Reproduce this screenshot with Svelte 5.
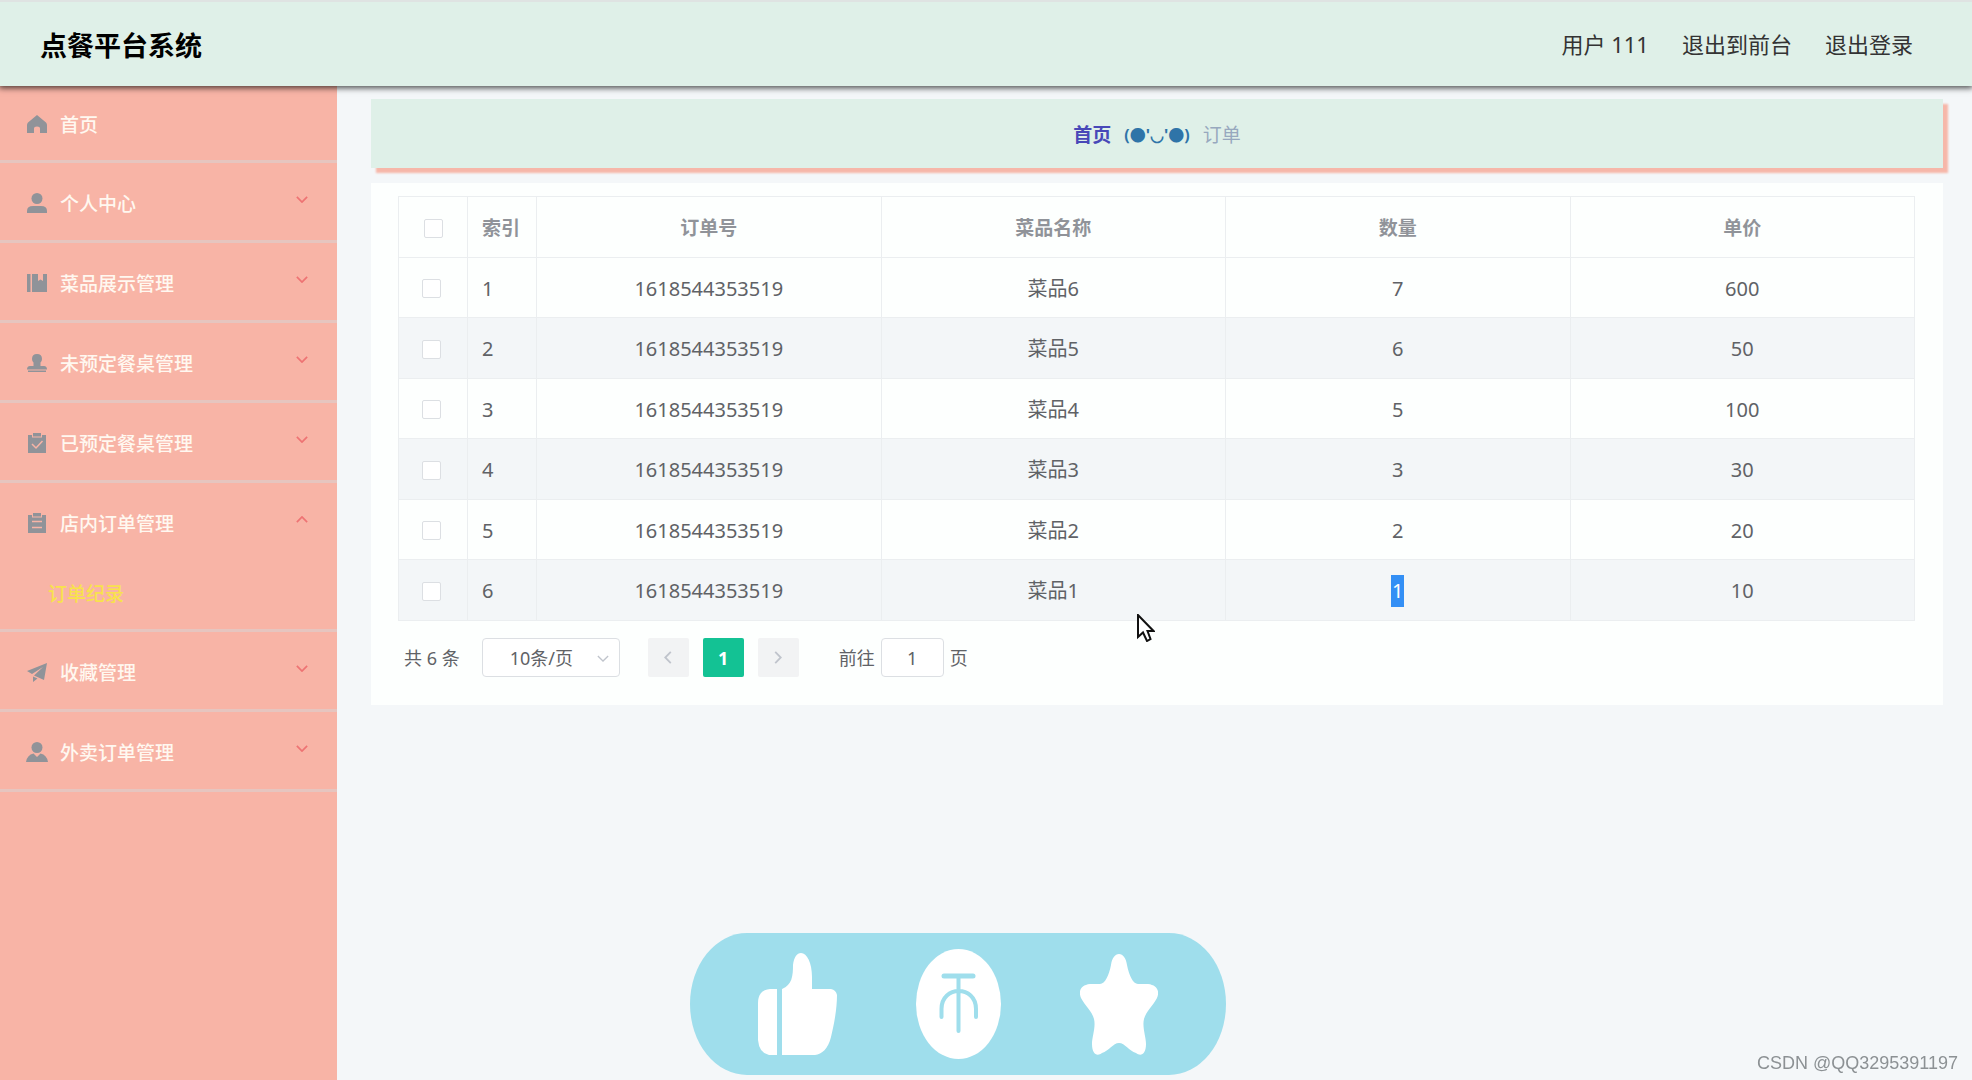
<script lang="ts">
	/**
	 * Order list page
	 * Header, collapsible side menu, order table with pagination and a floating action bar
	 */
	interface MenuItem {
		icon: string;
		label: string;
		children?: string[];
	}

	interface Order {
		id: number;
		orderNo: string;
		dish: string;
		count: number;
		price: number;
	}

	const menu: MenuItem[] = [
		{ icon: 'home', label: '首页' },
		{ icon: 'user', label: '个人中心', children: ['个人信息'] },
		{ icon: 'book', label: '菜品展示管理', children: ['菜品展示'] },
		{ icon: 'stamp', label: '未预定餐桌管理', children: ['未预定餐桌'] },
		{ icon: 'claim', label: '已预定餐桌管理', children: ['已预定餐桌'] },
		{ icon: 'order', label: '店内订单管理', children: ['订单纪录'] },
		{ icon: 'plane', label: '收藏管理', children: ['收藏'] },
		{ icon: 'custom', label: '外卖订单管理', children: ['外卖订单'] }
	];

	const orders: Order[] = [
		{ id: 1, orderNo: '1618544353519', dish: '菜品6', count: 7, price: 600 },
		{ id: 2, orderNo: '1618544353519', dish: '菜品5', count: 6, price: 50 },
		{ id: 3, orderNo: '1618544353519', dish: '菜品4', count: 5, price: 100 },
		{ id: 4, orderNo: '1618544353519', dish: '菜品3', count: 3, price: 30 },
		{ id: 5, orderNo: '1618544353519', dish: '菜品2', count: 2, price: 20 },
		{ id: 6, orderNo: '1618544353519', dish: '菜品1', count: 1, price: 10 }
	];

	let openMenu = $state('order');
	let checked = $state<number[]>([]);
	let pageSize = $state('10');
	let jumpTo = $state('1');

	let allChecked = $derived(checked.length === orders.length);

	function toggleMenu(item: MenuItem) {
		openMenu = openMenu === item.icon ? '' : item.icon;
	}

	function toggleAll() {
		checked = allChecked ? [] : orders.map((o) => o.id);
	}
</script>

{#snippet menuIcon(name: string)}
	<svg class="menu-icon" viewBox="0 0 20 20" aria-hidden="true">
		{#if name === 'home'}
			<path d="M10 1L19 8.500Q20 9.500 20 11V19H13V14.500Q13 12.500 10 12.500Q7 12.500 7 14.500V19H0V11Q0 9.500 1 8.500Z" />
		{:else if name === 'user'}
			<circle cx="10" cy="5.500" r="5.500" />
			<path d="M0 20V18Q0 13 6 13H14Q20 13 20 18V20Z" />
		{:else if name === 'book'}
			<path d="M0 1H3.500V19H0ZM5 1H11V8L13.500 6.500L16 8V1H20V19H5Z" />
		{:else if name === 'stamp'}
			<path d="M10 1Q15 1 15 6Q15 8 13.500 9.500V13H17Q20 13 20 16.500H0Q0 13 3 13H6.500V9.500Q5 8 5 6Q5 1 10 1ZM1 17.500H19V19H1Z" />
		{:else if name === 'claim'}
			<path d="M1 2H5V4.500H15V2H19V20H1ZM6 0H14V3.500H6Z" />
			<path class="cut" d="M5 11L9 15L15.500 8" />
		{:else if name === 'order'}
			<path d="M1 2H5V4.500H15V2H19V20H1ZM6 0H14V3.500H6Z" />
			<path class="cut" d="M5 8.500H15M5 14.500H15" />
		{:else if name === 'plane'}
			<path d="M20 1L0 9L5 12L16 5L7 13.500L17 18ZM6 14.500L10.500 16.500L6 20Z" />
		{:else}
			<circle cx="10" cy="5.500" r="5.500" />
			<path d="M-1 20Q0 13 6.500 11.500L10 15L13.500 11.500Q20 13 21 20Z" />
		{/if}
	</svg>
{/snippet}

<div class="page">
	<header class="header">
		<h1>点餐平台系统</h1>
		<nav class="header-nav">
			<span>用户 111</span>
			<a href="#front">退出到前台</a>
			<a href="#logout">退出登录</a>
		</nav>
	</header>

	<div class="body">
		<aside class="sidebar">
			<ul>
				{#each menu as item}
					<li>
						<button
							type="button"
							class="menu-title"
							aria-expanded={item.children ? openMenu === item.icon : undefined}
							onclick={() => toggleMenu(item)}
						>
							{@render menuIcon(item.icon)}
							<span>{item.label}</span>
							{#if item.children}
								<svg class="arrow" class:open={openMenu === item.icon} viewBox="0 0 14 8" aria-hidden="true">
									<path d="M1 1L7 7L13 1" />
								</svg>
							{/if}
						</button>
						{#if item.children && openMenu === item.icon}
							{#each item.children as child}
								<a class="sub-item" href="#orders">{child}</a>
							{/each}
						{/if}
					</li>
				{/each}
			</ul>
		</aside>

		<main class="content">
			<nav class="breadcrumb" aria-label="breadcrumb">
				<a href="#home">首页</a>
				<span class="separator">(●'◡'●)</span>
				<span class="current">订单</span>
			</nav>

			<section class="panel">
				<table>
					<colgroup>
						<col class="narrow" />
						<col class="narrow" />
						<col />
						<col />
						<col />
						<col />
					</colgroup>
					<thead>
						<tr>
							<th>
								<input type="checkbox" aria-label="全选" checked={allChecked} onchange={toggleAll} />
							</th>
							<th class="index">索引</th>
							<th>订单号</th>
							<th>菜品名称</th>
							<th>数量</th>
							<th>单价</th>
						</tr>
					</thead>
					<tbody>
						{#each orders as order}
							<tr>
								<td>
									<input type="checkbox" aria-label="选择 {order.id}" value={order.id} bind:group={checked} />
								</td>
								<td class="index">{order.id}</td>
								<td>{order.orderNo}</td>
								<td>{order.dish}</td>
								<td>
									{#if order.id === 6}
										<mark>{order.count}</mark>
									{:else}
										{order.count}
									{/if}
								</td>
								<td>{order.price}</td>
							</tr>
						{/each}
					</tbody>
				</table>

				<div class="pagination">
					<span>共 {orders.length} 条</span>
					<div class="size">
						<select bind:value={pageSize} aria-label="每页条数">
							<option value="10">10条/页</option>
							<option value="20">20条/页</option>
							<option value="50">50条/页</option>
						</select>
						<svg viewBox="0 0 14 8" aria-hidden="true"><path d="M1 1L7 7L13 1" /></svg>
					</div>
					<div class="pager">
						<button type="button" disabled aria-label="上一页">
							<svg viewBox="0 0 8 14" aria-hidden="true"><path d="M7 1L1 7L7 13" /></svg>
						</button>
						<button type="button" class="active">1</button>
						<button type="button" disabled aria-label="下一页">
							<svg viewBox="0 0 8 14" aria-hidden="true"><path d="M1 1L7 7L1 13" /></svg>
						</button>
					</div>
					<label class="jump">
						前往
						<input type="text" bind:value={jumpTo} />
						页
					</label>
				</div>
			</section>
		</main>
	</div>

	<div class="actions">
		<button type="button" aria-label="点赞">
			<svg width="79" height="102" viewBox="0 0 79 102">
				<path d="M19 36H12Q0 37 0 50V87Q1 100 11 102H19Z" />
				<path d="M24 102V36C34 32 35 23 35 12C36 4 39 0 43 0C49 0 54 10 54 24V36H73Q78 37 79 42C79 56 76 72 73 84C70 96 64 101 57 102Z" />
			</svg>
		</button>
		<button type="button" aria-label="投币">
			<svg width="85" height="110" viewBox="0 0 85 110">
				<ellipse cx="42.500" cy="55" rx="42.500" ry="55" />
				<path class="coin-bar" d="M28 27H57" />
				<path class="coin-line" d="M42.500 27V82M25.500 68V60C25.500 36 60 36 60 60V68" />
			</svg>
		</button>
		<button type="button" aria-label="收藏">
			<svg width="78" height="102" viewBox="0 0 78 102">
				<path d="M39 1C43 1 46 5 47 12C49 22 53 31 58 31L68 31C77 32 80 38 77 45C73 53 66 58 64 66C62 74 66 84 66 91C66 101 61 104 56 100C49 98 45 90 39 90C33 90 29 98 22 100C17 104 12 101 12 91C12 84 16 74 14 66C12 58 5 53 1 45C-2 38 1 32 10 31L20 31C25 31 29 22 31 12C32 5 35 1 39 1Z" />
			</svg>
		</button>
	</div>

	<svg class="pointer" width="18" height="28" viewBox="0 0 18 28" aria-hidden="true">
		<path d="M1 1V23L6 18.500L10 27L13.500 25L10.500 17H16.500Z" />
	</svg>

	<div class="watermark">CSDN @QQ3295391197</div>
</div>

<style>
	:global(body) {
		margin: 0;
		background: #f4f7f9;
	}

	.page {
		display: flex;
		flex-direction: column;
		min-height: 100vh;
		font-family: 'Noto Sans', 'Noto Sans CJK SC', sans-serif;
		font-size: 19px;
		color: #606266;
	}

	button,
	select,
	input {
		font: inherit;
		color: inherit;
	}

	a {
		color: inherit;
		text-decoration: none;
	}

	/* Header */
	.header {
		position: relative;
		z-index: 1;
		display: flex;
		align-items: center;
		justify-content: space-between;
		box-sizing: border-box;
		height: 86px;
		padding: 4px 59px 0 40px;
		border-top: 2px solid #dfe3e2;
		background: #dff0e8;
		box-shadow: 0 1px 6px 1px rgba(0, 0, 0, 0.7);
	}

	h1 {
		margin: 0;
		font-size: 27px;
		line-height: 36px;
		font-weight: 700;
		color: #000;
	}

	.header-nav {
		display: flex;
		gap: 33px;
		padding-bottom: 4px;
		font-size: 22px;
		line-height: 32px;
		color: #333;
	}

	.body {
		display: flex;
		flex: 1;
	}

	/* Side menu */
	.sidebar {
		flex: none;
		width: 337px;
		background: #f8b4a6;
	}

	.sidebar ul {
		margin: 0;
		padding: 0;
		list-style: none;
	}

	.sidebar li {
		border-bottom: 3px solid #e6c5bf;
	}

	.menu-title {
		display: flex;
		align-items: center;
		gap: 13px;
		width: 100%;
		height: 77px;
		padding: 2px 29px 0 27px;
		border: none;
		background: none;
		color: #fff8f0;
		font-weight: 500;
		text-align: left;
		cursor: pointer;
	}

	li:first-child .menu-title {
		height: 74px;
	}

	.menu-icon {
		width: 20px;
		height: 20px;
		fill: #909399;
		overflow: visible;
	}

	.menu-icon .cut {
		fill: none;
		stroke: #f8b4a6;
		stroke-width: 1.500;
	}

	.arrow {
		width: 12px;
		height: 7px;
		margin: 0 0 6px auto;
		fill: none;
		stroke: #ee7373;
		stroke-width: 2;
	}

	.arrow.open {
		transform: rotate(180deg);
	}

	.sub-item {
		display: block;
		padding-left: 48px;
		line-height: 69px;
		font-weight: 500;
		color: #f8e24c;
	}

	/* Content */
	.content {
		flex: 1;
		min-width: 0;
		padding: 13px 29px 0 34px;
	}

	.breadcrumb {
		display: flex;
		align-items: center;
		justify-content: center;
		gap: 13px;
		height: 69px;
		background: #dff0e8;
		box-shadow: 5px 5px 2px #f6b7a9;
	}

	.breadcrumb a {
		font-weight: 700;
		color: #4848b8;
	}

	.separator {
		font-size: 16px;
		font-weight: 700;
		color: #2f74a8;
	}

	.current {
		color: #97a8be;
	}

	.panel {
		margin-top: 15px;
		padding: 13px 28px 28px 27px;
		background: #fdfffe;
	}

	table {
		width: 100%;
		table-layout: fixed;
		border-collapse: collapse;
		text-align: center;
	}

	.narrow {
		width: 69px;
	}

	th,
	td {
		height: 60px;
		padding: 2px 0 0;
		border: 1px solid #ebeef0;
		box-sizing: border-box;
		line-height: 28px;
	}

	th {
		height: 61px;
		font-weight: 700;
		color: #909399;
	}

	td {
		font-size: 20px;
	}

	tbody tr:nth-child(even) td {
		height: 61px;
		background: #f3f6f8;
	}

	.index {
		padding-left: 14px;
		text-align: left;
	}

	mark {
		display: inline-block;
		padding: 0 1px;
		line-height: 32px;
		background: #338ff5;
		color: #fff;
	}

	input[type='checkbox'] {
		appearance: none;
		display: block;
		width: 19px;
		height: 19px;
		margin: 0 auto;
		border: 1px solid #dcdfe3;
		border-radius: 2px;
		background: #fff;
	}

	td input[type='checkbox'] {
		margin-left: 23px;
	}

	input[type='checkbox']:checked {
		border-color: #13c294;
		background: #13c294;
	}

	/* Pagination */
	.pagination {
		display: flex;
		align-items: center;
		padding: 17px 6px 0;
		font-size: 18px;
		line-height: 28px;
	}

	.size {
		position: relative;
		margin-left: 22px;
	}

	select {
		appearance: none;
		box-sizing: border-box;
		width: 138px;
		height: 39px;
		padding: 0 27px;
		border: 1px solid #dcdfe3;
		border-radius: 4px;
		background: #fff;
	}

	.size svg {
		position: absolute;
		top: 17px;
		right: 11px;
		width: 12px;
		height: 7px;
		fill: none;
		stroke: #c0c4cc;
		stroke-width: 1.500;
		pointer-events: none;
	}

	.pager {
		display: flex;
		gap: 14px;
		margin-left: 28px;
	}

	.pager button {
		display: flex;
		align-items: center;
		justify-content: center;
		width: 41px;
		height: 39px;
		padding: 0;
		border: none;
		border-radius: 2px;
		background: #f2f3f4;
	}

	.pager svg {
		width: 8px;
		height: 13px;
		fill: none;
		stroke: #c0c4cc;
		stroke-width: 2;
	}

	.pager .active {
		background: #13c294;
		color: #fff;
		font-weight: 700;
	}

	.jump {
		display: flex;
		align-items: center;
		gap: 6px;
		margin-left: 40px;
	}

	.jump input {
		box-sizing: border-box;
		width: 63px;
		height: 39px;
		padding: 0;
		border: 1px solid #dcdfe3;
		border-radius: 4px;
		background: #fff;
		text-align: center;
	}

	/* Floating bar */
	.actions {
		position: fixed;
		bottom: 5px;
		left: 35%;
		z-index: 2;
		display: flex;
		align-items: center;
		gap: 79px;
		box-sizing: border-box;
		height: 142px;
		padding: 0 68px;
		border-radius: 57px / 71px;
		background: #9fdeec;
	}

	.actions button {
		display: flex;
		padding: 0;
		border: none;
		background: none;
		cursor: pointer;
	}

	.actions svg {
		fill: #fff;
	}

	.actions .coin-bar {
		stroke: #9fdeec;
		stroke-width: 5;
		stroke-linecap: round;
	}

	.actions .coin-line {
		fill: none;
		stroke: #9fdeec;
		stroke-width: 4;
		stroke-linecap: round;
	}

	.pointer {
		position: absolute;
		top: 614px;
		left: 1137px;
		z-index: 3;
		fill: #fff;
		stroke: #111;
		stroke-width: 2;
	}

	.watermark {
		position: fixed;
		right: 14px;
		bottom: 7px;
		font-family: 'Liberation Sans', Arial, sans-serif;
		font-size: 18px;
		line-height: 20px;
		color: #8c9194;
	}
</style>
